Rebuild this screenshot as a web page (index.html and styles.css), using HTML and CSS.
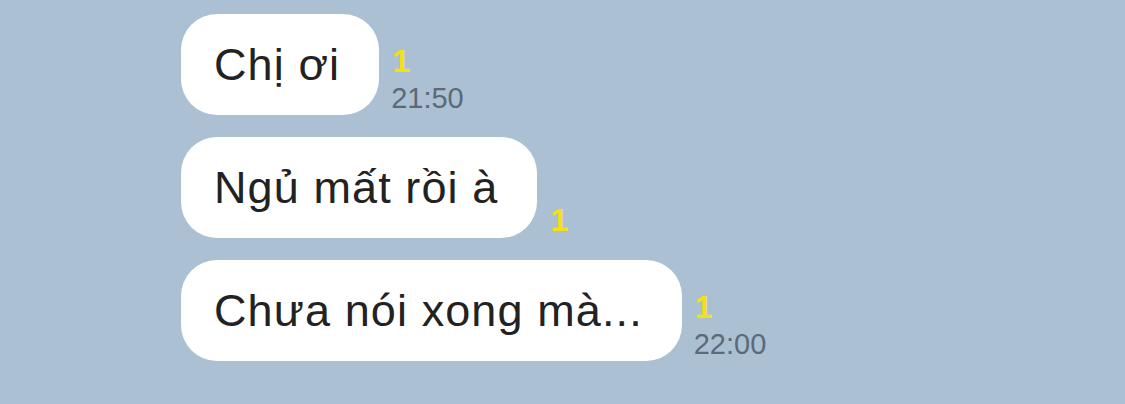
FILE: index.html
```html
<!DOCTYPE html>
<html lang="vi">
<head>
<meta charset="utf-8">
<link rel="stylesheet" href="styles.css">
</head>
<body>
<div class="chat">
  <div class="row">
    <div class="bubble">Chị ơi</div>
    <div class="meta"><span class="unread">1</span><span class="time">21:50</span></div>
  </div>
  <div class="row">
    <div class="bubble">Ngủ mất rồi à</div>
    <div class="meta"><span class="unread">1</span></div>
  </div>
  <div class="row">
    <div class="bubble">Chưa nói xong mà...</div>
    <div class="meta"><span class="unread">1</span><span class="time">22:00</span></div>
  </div>
</div>
</body>
</html>
```
FILE: styles.css
```css
html, body {
  margin: 0;
  padding: 0;
  background: #abc1d3;
  width: 1125px;
  height: 404px;
  overflow: hidden;
}
.chat {
  display: flex;
  flex-direction: column;
  gap: 22px;
  padding: 14px 0 0 181px;
  font-family: "Liberation Sans", Arial, sans-serif;
}
.row {
  display: flex;
  align-items: flex-end;
}
.bubble {
  background: #ffffff;
  color: #222222;
  height: 101px;
  box-sizing: border-box;
  border-radius: 36px;
  padding: 0 39px 0 33px;
  display: flex;
  align-items: center;
  font-size: 45px;
  letter-spacing: 1.1px;
  white-space: nowrap;
}
.meta {
  display: flex;
  flex-direction: column;
  margin-left: 12px;
  margin-bottom: -1px;
}
.unread {
  color: #f3e01a;
  font-size: 32px;
  font-weight: bold;
  line-height: 38px;
  padding-left: 1px;
}
.time {
  color: #5c6a78;
  font-size: 29px;
  line-height: 36px;
}
```
